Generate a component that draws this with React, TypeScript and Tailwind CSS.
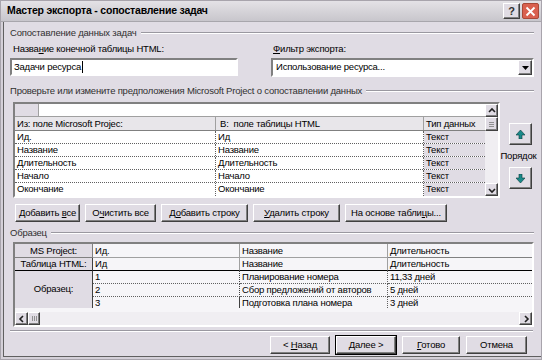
import React from 'react';

const raised =
  'border border-t-white border-l-white border-r-[#404040] border-b-[#404040] shadow-[inset_-1px_-1px_#808080] bg-[#e0dce4]';
const sunken =
  'border-2 border-t-[#808080] border-l-[#808080] border-r-white border-b-white';
const txt = 'text-[9.5px] tracking-[-0.2px]';

function Btn({ children, w, def = false }: { children: React.ReactNode; w: string; def?: boolean }) {
  return (
    <div className={`${w} h-[18px] ${def ? 'outline outline-1 outline-black' : ''} ${raised} flex items-center justify-center ${txt} text-black`}>
      <span className="whitespace-pre">{children}</span>
    </div>
  );
}

function GroupHead({ label }: { label: string }) {
  return (
    <div className="flex items-center h-[10px] gap-1 pr-[7px]">
      <span className={`${txt} leading-none text-[#303030]`}>{label}</span>
      <div className="flex-1 border-t border-t-[#9a98a0] border-b border-b-white" />
    </div>
  );
}

function ArrowBtn({ up }: { up?: boolean }) {
  return (
    <div className={`w-[23px] h-[22px] ${raised} flex items-center justify-center`}>
      <svg width="9" height="9" viewBox="0 0 9 9">
        {up ? (
          <path d="M4.5 0 L9 5 L6 5 L6 9 L3 9 L3 5 L0 5 Z" fill="#1a8a8a" stroke="#0a3a3a" strokeWidth="0.6" />
        ) : (
          <path d="M4.5 9 L9 4 L6 4 L6 0 L3 0 L3 4 L0 4 Z" fill="#1a8a8a" stroke="#0a3a3a" strokeWidth="0.6" />
        )}
      </svg>
    </div>
  );
}

function SbBtn({ dir }: { dir: 'up' | 'down' | 'left' | 'right' }) {
  const d = {
    up: 'M2 6 L5 3 L8 6',
    down: 'M2 4 L5 7 L8 4',
    left: 'M6 2 L3 5 L6 8',
    right: 'M4 2 L7 5 L4 8',
  }[dir];
  return (
    <div className={`w-[13px] h-[13px] ${raised} flex items-center justify-center shrink-0`}>
      <svg width="10" height="10" viewBox="0 0 10 10">
        <path d={d} fill="none" stroke="#202020" strokeWidth="1.6" />
      </svg>
    </div>
  );
}

export default function App() {
  const map = [
    ['Ид.', 'Ид'],
    ['Название', 'Название'],
    ['Длительность', 'Длительность'],
    ['Начало', 'Начало'],
    ['Окончание', 'Окончание'],
  ];
  const sample = [
    ['1', 'Планирование номера', '11,33 дней'],
    ['2', 'Сбор предложений от авторов', '5 дней'],
    ['3', 'Подготовка плана номера', '3 дней'],
  ];
  const cell = 'pl-[2px] whitespace-nowrap overflow-hidden';

  return (
    <div className="w-[542px] h-[360px] bg-[#d4d0d8] font-['Liberation_Sans',Arial,sans-serif] text-black overflow-hidden flex flex-col border border-[#a8a4ac]">
      {/* Title bar */}
      <div className="h-[21px] shrink-0 flex items-center pl-[6px] pr-[2px] bg-gradient-to-b from-[#e4e2e6] to-[#c8c6cc] border-b border-[#a8a6ac]">
        <span className="text-[10.5px] font-bold tracking-[-0.2px] flex-1">Мастер экспорта - сопоставление задач</span>
        <div className={`w-[17px] h-[16px] ${raised} bg-[#c8c8cc] flex items-center justify-center text-[11px] font-bold text-[#303030] mr-[2px]`}>?</div>
        <div className="w-[17px] h-[16px] rounded-[2px] bg-[#d9604f] border border-[#a84838] flex items-center justify-center">
          <svg width="11" height="11" viewBox="0 0 11 11">
            <path d="M1.5 1.5 L9.5 9.5 M9.5 1.5 L1.5 9.5" stroke="white" strokeWidth="1.8" />
          </svg>
        </div>
      </div>

      {/* Body */}
      <div className="flex-1 ml-[2px] mb-[2px] border-l border-b border-[#606060] bg-[#e0dce4] pl-[6px] pt-[6px] flex flex-col">
        <GroupHead label="Сопоставление данных задач" />

        <div className="flex mt-[4px]">
          <div className="w-[228px] flex flex-col">
            <span className={`${txt} leading-[14px] pl-[3px]`}>
              Назва<u>н</u>ие конечной таблицы HTML:
            </span>
            <div className={`mt-[2px] h-[18px] ${sunken} bg-white flex items-center pl-[2px] ${txt}`}>
              Задачи ресурса<span className="w-px h-[12px] bg-black ml-px" />
            </div>
          </div>
          <div className="ml-[33px] w-[263px] flex flex-col">
            <span className={`${txt} leading-[14px] pl-[2px]`}>
              <u>Ф</u>ильтр экспорта:
            </span>
            <div className={`mt-[2px] h-[19px] ${sunken} bg-white flex items-center ${txt}`}>
              <span className="flex-1 pl-[3px]">Использование ресурса...</span>
              <div className={`w-[14px] h-[15px] ${raised} flex items-center justify-center`}>
                <svg width="7" height="4" viewBox="0 0 7 4">
                  <path d="M0 0 L7 0 L3.5 4 Z" fill="#000" />
                </svg>
              </div>
            </div>
          </div>
        </div>

        <div className="mt-[9px]">
          <GroupHead label="Проверьте или измените предположения Microsoft Project о сопоставлении данных" />
        </div>

        {/* Mapping grid */}
        <div className="flex mt-[6px] ml-[3px]">
          <div className={`w-[487px] h-[96px] ${sunken} bg-white flex`}>
            <div className={`flex-1 flex flex-col ${txt}`}>
              <div className="h-[13px] flex border-b border-[#a0a0a0]">
                <div className="w-[24px] bg-[#e0dce4] border-r border-[#a0a0a0]" />
                <div className="flex-1 bg-white" />
              </div>
              <div className="h-[14px] flex bg-[#e8e6ea] border-b border-[#808080]">
                <div className={`w-[201px] ${cell} border-r border-[#a0a0a0] leading-[13px]`}>Из: поле Microsoft Projec:</div>
                <div className={`w-[208px] ${cell} pl-[4px] border-r border-[#a0a0a0] leading-[13px]`}>В:&nbsp; поле таблицы HTML</div>
                <div className={`flex-1 ${cell} leading-[13px]`}>Тип данных</div>
              </div>
              {map.map((r, i) => (
                <div
                  key={i}
                  className={`h-[13px] flex ${i < 4 ? 'border-b border-dotted border-[#606060]' : ''}`}
                >
                  <div className={`w-[201px] ${cell} border-r border-dotted border-[#606060] leading-[12px]`}>{r[0]}</div>
                  <div className={`w-[208px] ${cell} border-r border-dotted border-[#606060] leading-[12px]`}>{r[1]}</div>
                  <div className={`flex-1 ${cell} bg-[#e0dce4] leading-[12px]`}>Текст</div>
                </div>
              ))}
            </div>
            <div className="w-[13px] flex flex-col bg-[#f0eef2]">
              <SbBtn dir="up" />
              <div className={`h-[14px] ${raised} flex items-center justify-center`}>
                <div className="w-[5px] h-[5px] border-y border-[#909090] flex items-center">
                  <div className="w-full border-t border-[#909090]" />
                </div>
              </div>
              <div className="flex-1" />
              <SbBtn dir="down" />
            </div>
          </div>
          <div className="flex-1 flex flex-col items-center pt-[21px]">
            <ArrowBtn up />
            <span className={`${txt} leading-[10px] my-[6px] -ml-[4px]`}>Порядок</span>
            <ArrowBtn />
          </div>
        </div>

        {/* Action buttons */}
        <div className="flex gap-[5px] mt-[6px] ml-[5px]">
          <Btn w="w-[65px]">Добавить <u>в</u>се</Btn>
          <Btn w="w-[71px]">О<u>ч</u>истить все</Btn>
          <Btn w="w-[87px]">Д<u>о</u>бавить строку</Btn>
          <Btn w="w-[87px]"><u>У</u>далить строку</Btn>
          <Btn w="w-[102px]">На основе табли<u>ц</u>ы...</Btn>
        </div>

        <div className="mt-[6px]">
          <GroupHead label="Образец" />
        </div>

        {/* Sample grid */}
        <div className={`mt-[4px] ml-[3px] w-[521px] h-[85px] ${sunken} bg-[#f6f5f8] flex flex-col ${txt}`}>
          <div className="grid grid-cols-[78px_147px_148px_1fr] grid-rows-[14px_13px_13px_13px_11px] flex-1 overflow-hidden">
            <div className="bg-[#e0dce4] border-r border-[#404040] border-b border-[#808080] text-center leading-[13px]">MS Project:</div>
            <div className={`${cell} border-r border-[#a0a0a0] border-b border-[#808080] leading-[13px]`}>Ид.</div>
            <div className={`${cell} border-r border-[#a0a0a0] border-b border-[#808080] leading-[13px]`}>Название</div>
            <div className={`${cell} border-b border-[#808080] leading-[13px]`}>Длительность</div>

            <div className="bg-[#e0dce4] border-r border-[#404040] border-b border-b-black text-center leading-[12px] whitespace-nowrap">Таблица HTML:</div>
            <div className={`${cell} border-r border-[#a0a0a0] border-b border-b-black leading-[12px]`}>Ид</div>
            <div className={`${cell} border-r border-[#a0a0a0] border-b border-b-black leading-[12px]`}>Название</div>
            <div className={`${cell} border-b border-b-black leading-[12px]`}>Длительность</div>

            <div className="row-span-3 bg-[#e0dce4] border-r border-[#404040] flex items-center justify-center">Образец:</div>
            {sample.map((r, i) => (
              <React.Fragment key={i}>
                <div className={`${cell} leading-[12px] border-r border-[#404040] ${i < 2 ? 'border-b border-dotted border-b-[#606060]' : ''}`}>{r[0]}</div>
                <div className={`${cell} leading-[12px] border-r border-dotted border-r-[#606060] ${i < 2 ? 'border-b border-b-[#606060]' : ''}`}>{r[1]}</div>
                <div className={`${cell} leading-[12px] ${i < 2 ? 'border-b border-dotted border-b-[#606060]' : ''}`}>{r[2]}</div>
              </React.Fragment>
            ))}
          </div>
          <div className="h-[13px] shrink-0 flex bg-[#f0eef2]">
            <SbBtn dir="left" />
            <div className={`w-[12px] h-[13px] ${raised} flex items-center justify-center gap-px`}>
              <div className="w-px h-[5px] bg-[#909090]" />
              <div className="w-px h-[5px] bg-[#909090]" />
              <div className="w-px h-[5px] bg-[#909090]" />
            </div>
            <div className="flex-1" />
            <SbBtn dir="right" />
          </div>
        </div>

        <div className="mt-[3px] mr-[8px] border-t border-t-[#9a98a0] border-b border-b-white" />

        {/* Bottom buttons */}
        <div className="flex justify-end gap-[6px] mt-[4px] pr-[14px]">
          <Btn w="w-[60px]">&lt; <u>Н</u>азад</Btn>
          <Btn w="w-[60px]" def><u>Д</u>алее &gt;</Btn>
          <Btn w="w-[58px]"><u>Г</u>отово</Btn>
          <Btn w="w-[61px]">Отмена</Btn>
        </div>
      </div>
    </div>
  );
}
